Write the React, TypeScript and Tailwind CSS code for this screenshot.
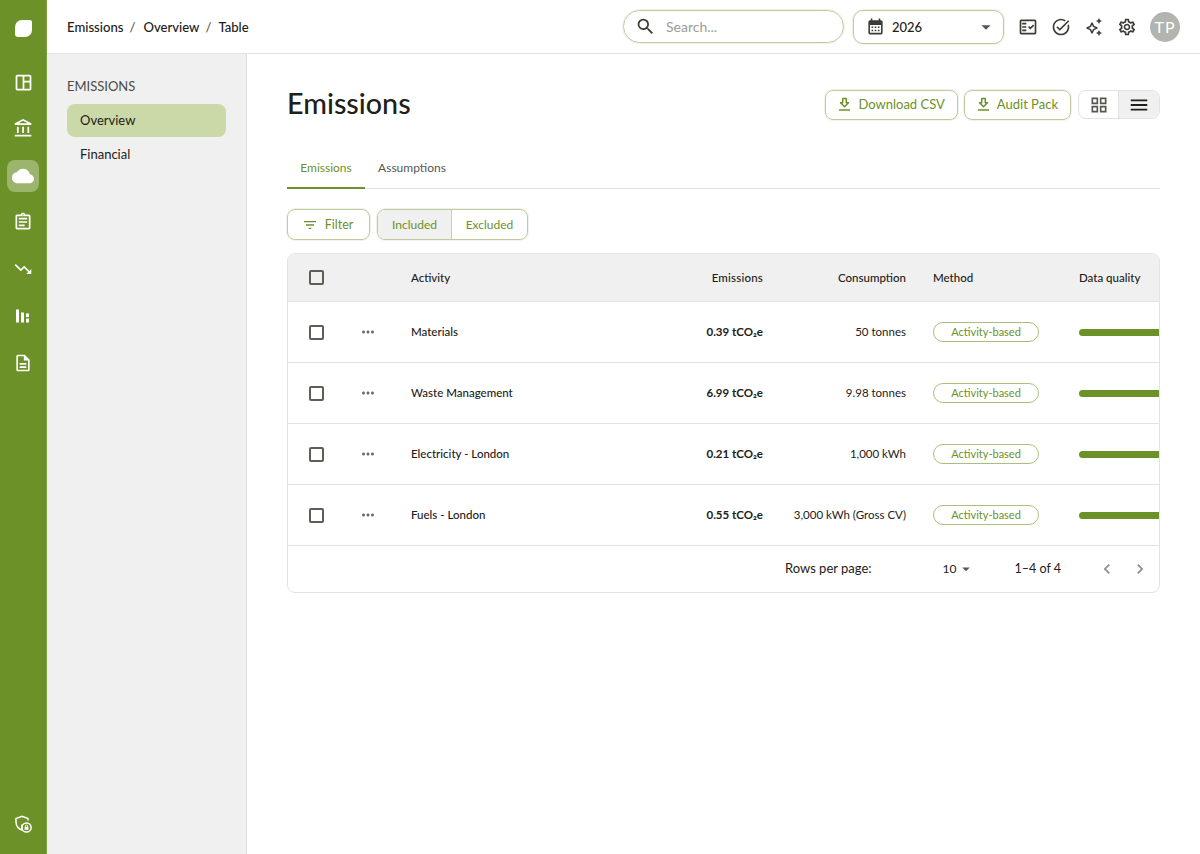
import React from 'react';
import {
  MdArrowDropDown,
  MdCalendarMonth,
  MdChevronLeft,
  MdChevronRight,
  MdCloud,
  MdFilterList,
  MdMenu,
  MdMoreHoriz,
  MdOutlineAccountBalance,
  MdOutlineAssignment,
  MdOutlineDescription,
  MdOutlineFactCheck,
  MdOutlineGridView,
  MdOutlineSettings,
  MdOutlineSpaceDashboard,
  MdOutlineTaskAlt,
  MdSearch,
  MdTrendingDown,
} from 'react-icons/md';

const rows = [
  { activity: 'Materials', emissions: '0.39 tCO₂e', consumption: '50 tonnes' },
  { activity: 'Waste Management', emissions: '6.99 tCO₂e', consumption: '9.98 tonnes' },
  { activity: 'Electricity - London', emissions: '0.21 tCO₂e', consumption: '1,000 kWh' },
  { activity: 'Fuels - London', emissions: '0.55 tCO₂e', consumption: '3,000 kWh (Gross CV)' },
];

const gridCols = 'grid grid-cols-[62px_61px_1fr_120px_143px_173px_80px] items-center';

const Checkbox = () => <span className="block h-[15px] w-[15px] rounded-[2px] border-2 border-[#5c5f58]" />;

const DownloadIcon = () => (
  <svg width="17" height="17" viewBox="0 0 17 17" fill="none" stroke="currentColor" strokeWidth="1.5" strokeLinejoin="round">
    <path d="M6.7 2.5h3.6v4.2h2.2l-4 4-4-4h2.2z" />
    <path d="M3 14h11" />
  </svg>
);

const BarsIcon = () => (
  <svg width="18" height="18" viewBox="0 0 18 18" fill="white">
    <rect x="2" y="2.5" width="3" height="13" />
    <rect x="7" y="5.5" width="3" height="10" />
    <rect x="12" y="6.5" width="3" height="3.6" />
    <rect x="12" y="11.6" width="3" height="3.9" />
  </svg>
);

const ShieldLock = () => (
  <svg width="20" height="20" viewBox="0 0 20 20" fill="none" stroke="white" strokeWidth="1.5">
    <path d="M9 10.5v5.5c-3.2-.8-6-4-6-7.8V4.6L9 2.4l6 2.2v2" />
    <circle cx="13.5" cy="13.5" r="4.6" />
    <rect x="11.6" y="13" width="3.8" height="2.8" fill="white" stroke="none" />
    <path d="M12.4 13v-1c0-1.3 2.2-1.3 2.2 0v1" strokeWidth="0.9" />
  </svg>
);

const Sparkles = () => (
  <svg width="20" height="20" viewBox="0 0 20 20" fill="none" stroke="#3a3d36" strokeWidth="1.5" strokeLinejoin="round">
    <path d="M8 6l1.6 3.4L13 11l-3.4 1.6L8 16l-1.6-3.4L3 11l3.4-1.6z" />
    <path d="M15 1.6l.8 1.6 1.6.8-1.6.8-.8 1.6-.8-1.6-1.6-.8 1.6-.8z" fill="#3a3d36" strokeWidth="0.6" />
    <path d="M15 13.6l.8 1.6 1.6.8-1.6.8-.8 1.6-.8-1.6-1.6-.8 1.6-.8z" fill="#3a3d36" strokeWidth="0.6" />
  </svg>
);

export default function App() {
  return (
    <div className="flex min-h-[854px] w-full bg-white font-['Lato','Noto_Sans',sans-serif] text-[#1d2119]">
      {/* Icon rail */}
      <aside className="flex w-[47px] shrink-0 flex-col items-center border-r border-[#7d9e40] bg-[#6c9128] pb-[20px] text-white">
        <div className="flex h-[57px] w-full items-center justify-center">
          <span className="block h-[17px] w-[17px] rounded-tl-[7px] rounded-tr-[2px] rounded-br-[7px] rounded-bl-[3px] bg-white" />
        </div>
        <nav className="mt-[9px] flex flex-col gap-[14.8px]">
          <span className="flex h-8 w-8 items-center justify-center"><MdOutlineSpaceDashboard size={21} /></span>
          <span className="flex h-8 w-8 items-center justify-center"><MdOutlineAccountBalance size={21} /></span>
          <span className="flex h-8 w-8 items-center justify-center rounded-lg bg-[#9bb56d]"><MdCloud size={22} /></span>
          <span className="flex h-8 w-8 items-center justify-center"><MdOutlineAssignment size={20} /></span>
          <span className="flex h-8 w-8 items-center justify-center"><MdTrendingDown size={20} /></span>
          <span className="flex h-8 w-8 items-center justify-center"><BarsIcon /></span>
          <span className="flex h-8 w-8 items-center justify-center"><MdOutlineDescription size={20} /></span>
        </nav>
        <div className="mt-auto flex h-5 items-center justify-center"><ShieldLock /></div>
      </aside>

      <div className="flex min-w-0 flex-1 flex-col">
        {/* Top bar */}
        <header className="flex h-[54px] shrink-0 items-center border-b border-[#e3e3e3] pl-5 pr-[20px]">
          <div className="mt-[2px] flex items-center text-[13.1px] font-medium">
            <span>Emissions</span>
            <span className="ml-[6px] mr-[8px] text-[#55584f]">/</span>
            <span>Overview</span>
            <span className="ml-[6px] mr-[7px] text-[#55584f]">/</span>
            <span>Table</span>
          </div>
          <div className="ml-auto flex h-[33px] w-[221px] items-center gap-[10px] rounded-full border border-[#bfcb9f] pl-[11px] ring-1 ring-[#f0f3e8]">
            <MdSearch size={21} className="text-[#3a3d36]" />
            <span className="text-[14px] text-[#9a9c96]">Search...</span>
          </div>
          <div className="ml-[9px] flex h-[34px] w-[151px] items-center rounded-[10px] border border-[#bfcb9f] pl-[12px] pr-[6px] ring-1 ring-[#f0f3e8]">
            <MdCalendarMonth size={19} className="text-[#3a3d36]" />
            <span className="ml-[7px] mt-[2px] text-[13px] font-medium">2026</span>
            <MdArrowDropDown size={22} className="ml-auto text-[#55584f]" />
          </div>
          <div className="ml-[14px] flex items-center gap-[13px] text-[#3a3d36]">
            <MdOutlineFactCheck size={20} />
            <MdOutlineTaskAlt size={20} />
            <Sparkles />
            <MdOutlineSettings size={20} />
          </div>
          <span className="ml-[13px] flex h-[30px] w-[30px] items-center justify-center rounded-full bg-[#b2b4b0] text-[16px] tracking-[1px] text-white">TP</span>
        </header>

        <div className="flex min-h-0 flex-1">
          {/* Section nav */}
          <aside className="w-[200px] shrink-0 border-r border-[#dedede] bg-[#f0f0f0] px-5 pt-[23px]">
            <p className="text-[13px] leading-[18px] text-[#4a4d46]">EMISSIONS</p>
            <div className="mt-[9px] flex h-[33px] items-center rounded-lg bg-[#cbd9a8] px-[13px] text-[13px]">Overview</div>
            <div className="flex h-[35px] items-center px-[13px] pt-px text-[13px]">Financial</div>
          </aside>

          {/* Page */}
          <main className="min-w-0 flex-1 px-10 pt-[33px]">
            <div className="flex h-[32px] items-center">
              <h1 className="text-[28.7px] font-medium leading-[32px]">Emissions</h1>
              <div className="ml-auto mt-[3px] flex items-center gap-[6px]">
                <button className="flex h-[30px] items-center gap-[5px] rounded-lg border border-[#bfcb9f] pl-[10px] pr-[12px] text-[13px] text-[#6c9128] ring-1 ring-[#f0f3e8]">
                  <DownloadIcon />Download CSV
                </button>
                <button className="flex h-[30px] items-center gap-[5px] rounded-lg border border-[#bfcb9f] pl-[10px] pr-[12px] text-[13px] text-[#6c9128] ring-1 ring-[#f0f3e8]">
                  <DownloadIcon />Audit Pack
                </button>
                <div className="ml-[1px] flex h-[29px] overflow-hidden rounded-lg border border-[#e2e2e2]">
                  <span className="flex w-[40px] items-center justify-center border-r border-[#e2e2e2] text-[#55584f]"><MdOutlineGridView size={20} /></span>
                  <span className="flex w-[40px] items-center justify-center bg-[#f0f0f0] text-[#1d2119]"><MdMenu size={22} /></span>
                </div>
              </div>
            </div>

            {/* Tabs */}
            <div className="mt-[30px] flex h-[40px] border-b border-[#e3e3e3] text-[12px]">
              <span className="-mb-px flex w-[78px] items-center justify-center border-b-2 border-[#6c9128] text-[#6c9128]">Emissions</span>
              <span className="flex w-[94px] items-center justify-center pb-px text-[#55584f]">Assumptions</span>
            </div>

            {/* Filters */}
            <div className="mt-[20px] flex items-center gap-[7px]">
              <button className="flex h-[31px] w-[83px] items-center justify-center gap-[7px] rounded-lg border border-[#bfcb9f] pr-[2px] text-[12.5px] text-[#6c9128] ring-1 ring-[#f0f3e8]">
                <MdFilterList size={16} /><span className="mt-[2px]">Filter</span>
              </button>
              <div className="flex h-[31px] overflow-hidden rounded-lg border border-[#bfcb9f] text-[12px] text-[#6c9128] ring-1 ring-[#f0f3e8]">
                <span className="flex w-[74px] items-center justify-center border-r border-[#c5d1a8] bg-[#f0f0f0]">Included</span>
                <span className="flex w-[75px] items-center justify-center">Excluded</span>
              </div>
            </div>

            {/* Table */}
            <div className="mt-[13px] overflow-hidden rounded-lg border border-[#e3e3e3]">
              <div className={`${gridCols} h-[48px] border-b border-[#e3e3e3] bg-[#f0f0f0] text-[11.5px] font-medium`}>
                <span className="pl-[21px]"><Checkbox /></span>
                <span />
                <span>Activity</span>
                <span className="text-right tracking-[0.2px]">Emissions</span>
                <span className="text-right">Consumption</span>
                <span className="pl-[27px]">Method</span>
                <span>Data quality</span>
              </div>
              {rows.map((row) => (
                <div key={row.activity} className={`${gridCols} h-[61px] border-b border-[#e3e3e3] text-[11.5px]`}>
                  <span className="pl-[21px]"><Checkbox /></span>
                  <span className="pl-[9px] text-[#6a6d66]"><MdMoreHoriz size={18} /></span>
                  <span className="font-medium">{row.activity}</span>
                  <span className="text-right font-bold">{row.emissions}</span>
                  <span className="text-right">{row.consumption}</span>
                  <span className="pl-[27px]">
                    <span className="flex h-[20px] w-[106px] items-center justify-center rounded-full border border-[#a9c07c] text-[11px] text-[#6c9128]">Activity-based</span>
                  </span>
                  <span className="h-[7px] rounded-l-full bg-[#6c9128]" />
                </div>
              ))}
              <div className="flex h-[46px] items-center text-[13px]">
                <span className="ml-auto">Rows per page:</span>
                <span className="ml-[71px] flex items-center text-[12px]">10<MdArrowDropDown size={18} className="text-[#55584f]" /></span>
                <span className="ml-[40px] text-[12.5px]">1–4 of 4</span>
                <span className="ml-[36px] text-[#8c8e89]"><MdChevronLeft size={20} /></span>
                <span className="ml-[13px] mr-[9px] text-[#8c8e89]"><MdChevronRight size={20} /></span>
              </div>
            </div>
          </main>
        </div>
      </div>
    </div>
  );
}
